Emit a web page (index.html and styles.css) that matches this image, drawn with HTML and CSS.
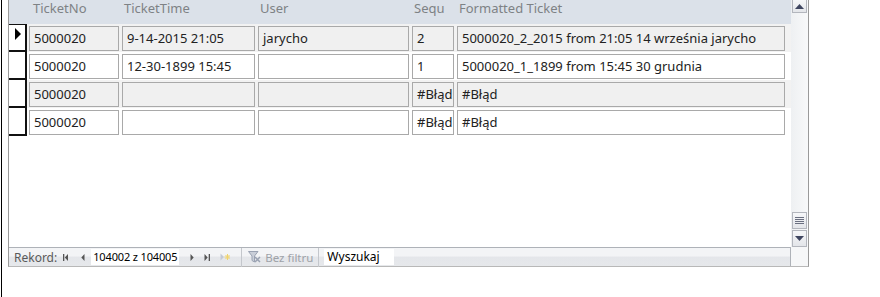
FILE: index.html
```html
<!DOCTYPE html>
<html lang="pl">
<head>
    <meta charset="UTF-8">
    <title>Tickets</title>
    <link rel="stylesheet" href="styles.css">
</head>
<body>
    <div class="page">
        <div class="window">
            <div class="sheet">
                <div class="header">
                    <span class="corner"></span>
                    <span class="head">TicketNo</span>
                    <span class="head">TicketTime</span>
                    <span class="head">User</span>
                    <span class="head">Sequ</span>
                    <span class="head">Formatted Ticket</span>
                </div>
                <div class="row alt">
                    <span class="selector current"></span>
                    <span class="cell">5000020</span>
                    <span class="cell">9-14-2015 21:05</span>
                    <span class="cell">jarycho</span>
                    <span class="cell">2</span>
                    <span class="cell">5000020_2_2015 from 21:05 14 września jarycho</span>
                </div>
                <div class="row">
                    <span class="selector"></span>
                    <span class="cell">5000020</span>
                    <span class="cell">12-30-1899 15:45</span>
                    <span class="cell"></span>
                    <span class="cell">1</span>
                    <span class="cell">5000020_1_1899 from 15:45 30 grudnia</span>
                </div>
                <div class="row alt">
                    <span class="selector"></span>
                    <span class="cell">5000020</span>
                    <span class="cell"></span>
                    <span class="cell"></span>
                    <span class="cell">#Błąd</span>
                    <span class="cell">#Błąd</span>
                </div>
                <div class="row">
                    <span class="selector"></span>
                    <span class="cell">5000020</span>
                    <span class="cell"></span>
                    <span class="cell"></span>
                    <span class="cell">#Błąd</span>
                    <span class="cell">#Błąd</span>
                </div>
            </div>
            <div class="vscroll">
                <span class="sbtn up"><svg width="9" height="5" viewBox="0 0 9 5"><path d="M0 5 L4.5 0 L9 5 Z" fill="#3f4660"/></svg></span>
                <span class="track"></span>
                <span class="sbtn thumb"><svg width="9" height="7" viewBox="0 0 9 7"><path d="M0 0.5H9M0 2.5H9M0 4.5H9M0 6.5H9" stroke="#6a6f80" stroke-width="1"/></svg></span>
                <span class="sbtn down"><svg width="9" height="5" viewBox="0 0 9 5"><path d="M0 0 L4.5 5 L9 0 Z" fill="#3f4660"/></svg></span>
            </div>
            <div class="status">
                <span class="label">Rekord:</span>
                <span class="nav first"><svg width="6" height="7" viewBox="0 0 6 7"><rect x="0" y="0" width="1.3" height="7" fill="#555"/><path d="M5 0 L1.8 3.5 L5 7 Z" fill="#555"/></svg></span>
                <span class="nav"><svg width="4" height="7" viewBox="0 0 4 7"><path d="M3.5 0 L0.3 3.5 L3.5 7 Z" fill="#555"/></svg></span>
                <span class="counter">104002 z 104005</span>
                <span class="nav"><svg width="4" height="7" viewBox="0 0 4 7"><path d="M0.5 0 L3.7 3.5 L0.5 7 Z" fill="#555"/></svg></span>
                <span class="nav"><svg width="6" height="7" viewBox="0 0 6 7"><path d="M0.5 0 L3.7 3.5 L0.5 7 Z" fill="#555"/><rect x="4.7" y="0" width="1.3" height="7" fill="#555"/></svg></span>
                <span class="nav"><svg width="10" height="8" viewBox="0 0 10 8"><path d="M0.5 0.5 L4 4 L0.5 7.5 Z" fill="#c3c9d6"/><path d="M7.5 1 V7 M4.5 4 H10.5 M5.5 2 L9.5 6 M9.5 2 L5.5 6" stroke="#f0d36a" stroke-width="1"/></svg></span>
                <span class="sep"></span>
                <span class="filter"><svg width="13" height="12" viewBox="0 0 13 12"><path d="M0.5 0.5 H10 L6.5 5 V11 L4 9.5 V5 Z" fill="#c9ced8" stroke="#9aa2b2" stroke-width="1"/><path d="M7 6 L12 11 M12 6 L7 11" stroke="#9aa2b2" stroke-width="1.5"/></svg>Bez filtru</span>
                <span class="sep"></span>
                <span class="search">Wyszukaj</span>
            </div>
            <div class="corner-box"></div>
        </div>
    </div>
</body>
</html>
```

FILE: styles.css
```css
body {
    margin: 0;
    background-color: #fff;
    font-family: 'Noto Sans', 'Open Sans', sans-serif;
    font-size: 12px;
    color: #222;
}
.page {
    margin-left: 1px;
    border-left: 1px solid #000;
    height: 297px;
    padding-left: 6px;
}
.window {
    width: 799px;
    height: 266px;
    border-left: 1px solid #9a9a9a;
    border-right: 1px solid #9a9a9a;
    border-bottom: 1px solid #b8b8b8;
    display: grid;
    grid-template-columns: 782px 17px;
    grid-template-rows: 247px 19px;
}
.sheet {
    background-color: #fff;
    overflow: hidden;
}
.header, .row {
    display: grid;
    grid-template-columns: 18px 93px 136px 154px 45px 333px;
    align-items: center;
}
.header {
    height: 24px;
    background-color: #dbe1e9;
    color: #7e8285;
    font-size: 13px;
}
.head {
    padding-left: 6px;
    margin-top: -8px;
    white-space: nowrap;
    overflow: hidden;
}
.head:nth-child(3), .head:nth-child(4), .head:nth-child(6) {
    padding-left: 4px;
}
.head:nth-child(5) {
    width: 40px;
    padding-left: 4px;
    box-sizing: border-box;
}
.row {
    height: 28px;
}
.row.alt {
    background-color: #f2f2f2;
}
.selector {
    height: 28px;
    box-sizing: border-box;
    border-right: 2px solid #111;
    border-bottom: 2px solid #111;
    background-color: #fff;
    position: relative;
}
.header + .row .selector {
    border-top: 1px solid #111;
}
.selector.current::after {
    content: "";
    position: absolute;
    left: 6px;
    top: 3px;
    border-left: 6px solid #000;
    border-top: 6px solid transparent;
    border-bottom: 6px solid transparent;
}
.cell {
    height: 25px;
    line-height: 23px;
    margin-left: 2px;
    margin-right: 1px;
    box-sizing: border-box;
    border: 1px solid #a9a9a9;
    background-color: #fff;
    padding-left: 4px;
    font-size: 13px;
    white-space: nowrap;
    overflow: hidden;
}
.row.alt .cell {
    background-color: #f0f0f0;
}
.row .cell:nth-child(6) {
    margin-right: 3px;
}
.vscroll {
    grid-row: 1;
    grid-column: 2;
    display: flex;
    flex-direction: column;
    background: linear-gradient(to right, #eef0f2, #f8f9fa);
    padding: 0 1px;
}
.sbtn {
    display: flex;
    align-items: center;
    justify-content: center;
    height: 16px;
    box-sizing: border-box;
    border: 1px solid #b3b6bd;
    background: linear-gradient(to bottom, #f6f7f9, #e3e5e9);
}
.sbtn.up {
    height: 13px;
    border-top: none;
}
.sbtn.thumb {
    height: 17px;
}
.sbtn.down {
    height: 17px;
    margin-top: 1px;
}
.track {
    flex: 1;
}
.status {
    grid-row: 2;
    grid-column: 1;
    display: flex;
    align-items: center;
    border-top: 1px solid #aeb2b8;
    border-right: 1px solid #aeb2b8;
    background: linear-gradient(to bottom, #f3f4f6 0%, #f3f4f6 45%, #e4e6ea 50%, #e6e8eb 100%);
    color: #5a5a5a;
    font-size: 12px;
    box-sizing: border-box;
    white-space: nowrap;
}
.label {
    margin-left: 5px;
    margin-right: 6px;
}
.nav {
    display: flex;
    align-items: center;
    margin-right: 10px;
}
.nav.first {
    margin-right: 12px;
}
.counter {
    background-color: #fff;
    color: #000;
    height: 16px;
    line-height: 16px;
    width: 88px;
    padding-left: 2px;
    box-sizing: border-box;
    font-size: 11px;
    letter-spacing: -0.15px;
    margin-left: -4px;
    margin-right: 11px;
    overflow: hidden;
}
.sep {
    width: 1px;
    height: 19px;
    background-color: #c4c7cc;
    margin: 0 3px 0 1px;
}
.filter {
    display: flex;
    align-items: center;
    gap: 4px;
    color: #9ea2a8;
    font-size: 11.5px;
    margin-left: 3px;
    margin-right: 4px;
}
.search {
    background-color: #fff;
    color: #000;
    height: 16px;
    line-height: 16px;
    width: 70px;
    padding-left: 3px;
    box-sizing: border-box;
    margin-left: 2px;
}
.corner-box {
    grid-row: 2;
    grid-column: 2;
    background-color: #f6f7f8;
}
```
